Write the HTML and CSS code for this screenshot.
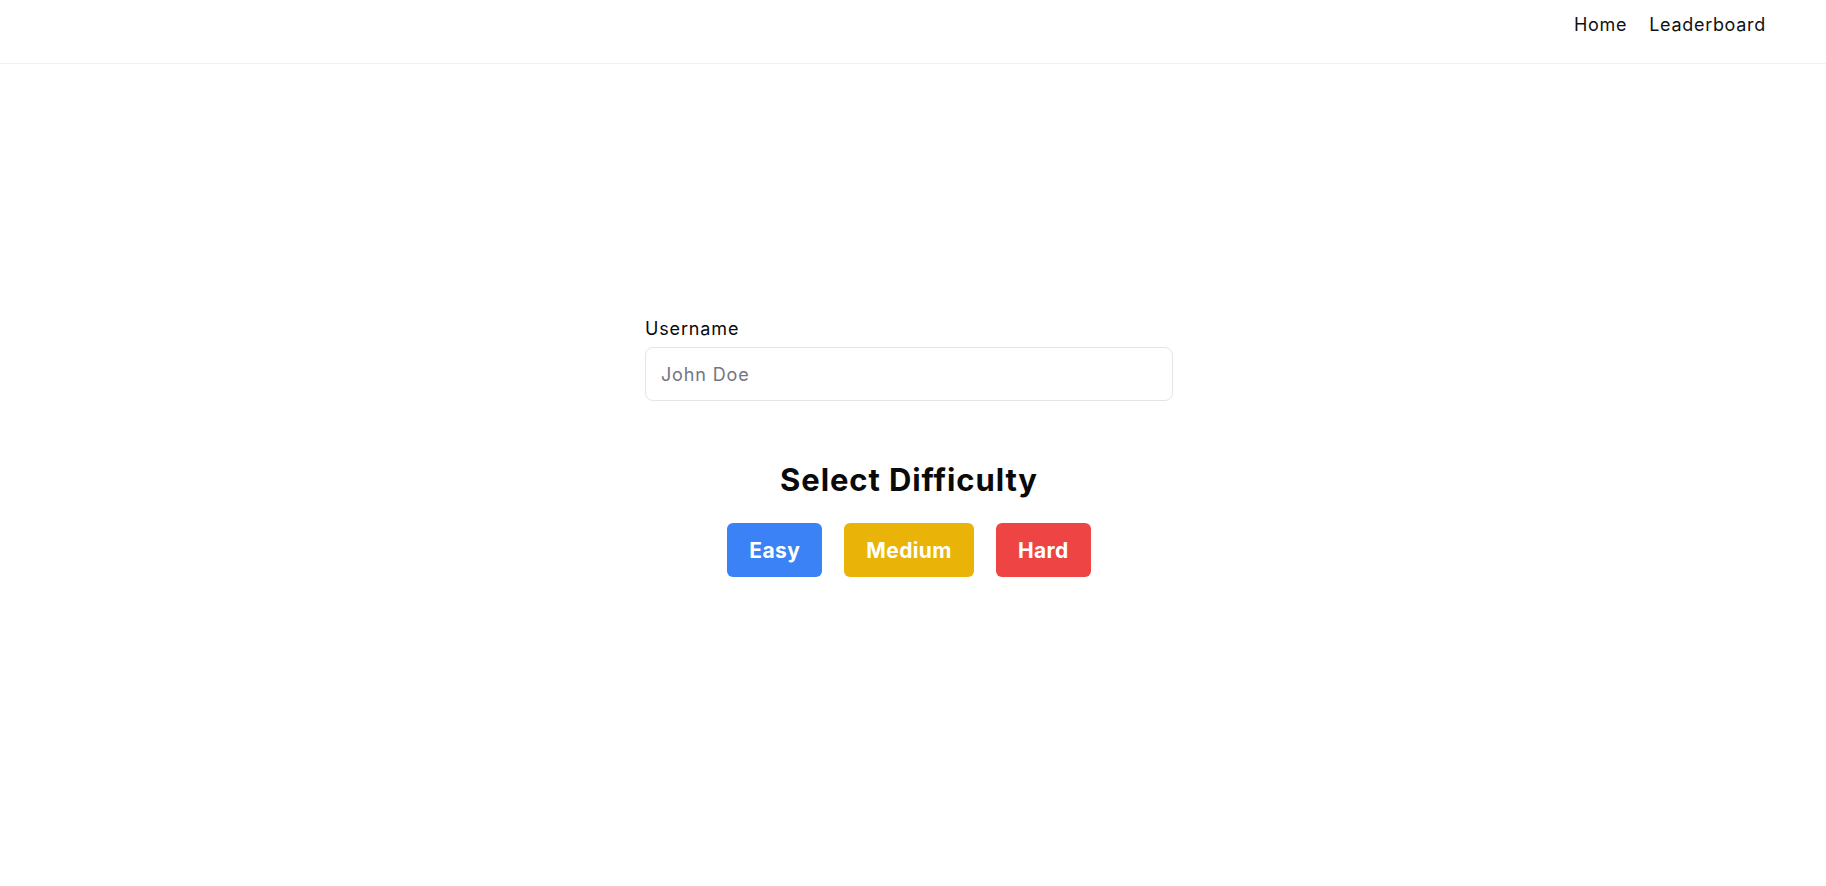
FILE: index.html
```html
<!DOCTYPE html>
<html lang="en">
<head>
<meta charset="utf-8">
<title>Quiz</title>
<link rel="stylesheet" href="styles.css">
</head>
<body>
<header class="site-header">
  <nav class="nav">
    <a class="nav-link" href="#">Home</a>
    <a class="nav-link" href="#">Leaderboard</a>
  </nav>
</header>
<main class="main">
  <div class="panel">
    <div class="field">
      <label class="field-label" for="username">Username</label>
      <input class="field-input" id="username" type="text" placeholder="John Doe">
    </div>
    <section class="difficulty">
      <h2 class="difficulty-title">Select Difficulty</h2>
      <div class="difficulty-buttons">
        <button class="btn btn-easy">Easy</button>
        <button class="btn btn-medium">Medium</button>
        <button class="btn btn-hard">Hard</button>
      </div>
    </section>
  </div>
</main>
</body>
</html>
```

FILE: styles.css
```css
* {
  box-sizing: border-box;
}

html, body {
  margin: 0;
  padding: 0;
  background: #ffffff;
}

body {
  font-family: "Inter", "Noto Sans", sans-serif;
  color: #111111;
}

.site-header {
  height: 64px;
  border-bottom: 1px solid #f1f1f1;
  display: flex;
  justify-content: flex-end;
  align-items: flex-start;
  padding: 11px 60px 0 0;
}

.nav {
  display: flex;
  gap: 22px;
}

.nav-link {
  font-size: 18px;
  line-height: 27px;
  letter-spacing: 0.7px;
  color: #111111;
  text-decoration: none;
}

.main {
  display: flex;
  justify-content: center;
  padding: 251px 8px 0 0;
}

.panel {
  width: 528px;
  display: flex;
  flex-direction: column;
}

.field {
  display: flex;
  flex-direction: column;
  gap: 5px;
}

.field-label {
  font-size: 18px;
  line-height: 27px;
  letter-spacing: 0.85px;
  color: #0a0a0a;
}

.field-input {
  height: 54px;
  border: 1px solid #e3e4e6;
  border-radius: 8px;
  padding: 0 15px;
  font-family: "Inter", "Noto Sans", sans-serif;
  font-size: 18px;
  letter-spacing: 0.85px;
  color: #111111;
  outline: none;
}

.field-input::placeholder {
  color: #737680;
}

.difficulty {
  margin-top: 60px;
  display: flex;
  flex-direction: column;
  align-items: center;
}

.difficulty-title {
  margin: 0;
  font-size: 31px;
  line-height: 37px;
  font-weight: 700;
  letter-spacing: 0.9px;
  color: #0a0a0a;
}

.difficulty-buttons {
  margin-top: 25px;
  display: flex;
  gap: 22px;
}

.btn {
  height: 54px;
  border: none;
  border-radius: 6px;
  padding: 0 22px;
  font-family: "Inter", "Noto Sans", sans-serif;
  font-size: 21px;
  font-weight: 700;
  letter-spacing: 0.4px;
  color: #ffffff;
  cursor: pointer;
}

.btn-easy {
  background: #3b82f6;
}

.btn-medium {
  background: #eab308;
}

.btn-hard {
  background: #ef4444;
}
```
